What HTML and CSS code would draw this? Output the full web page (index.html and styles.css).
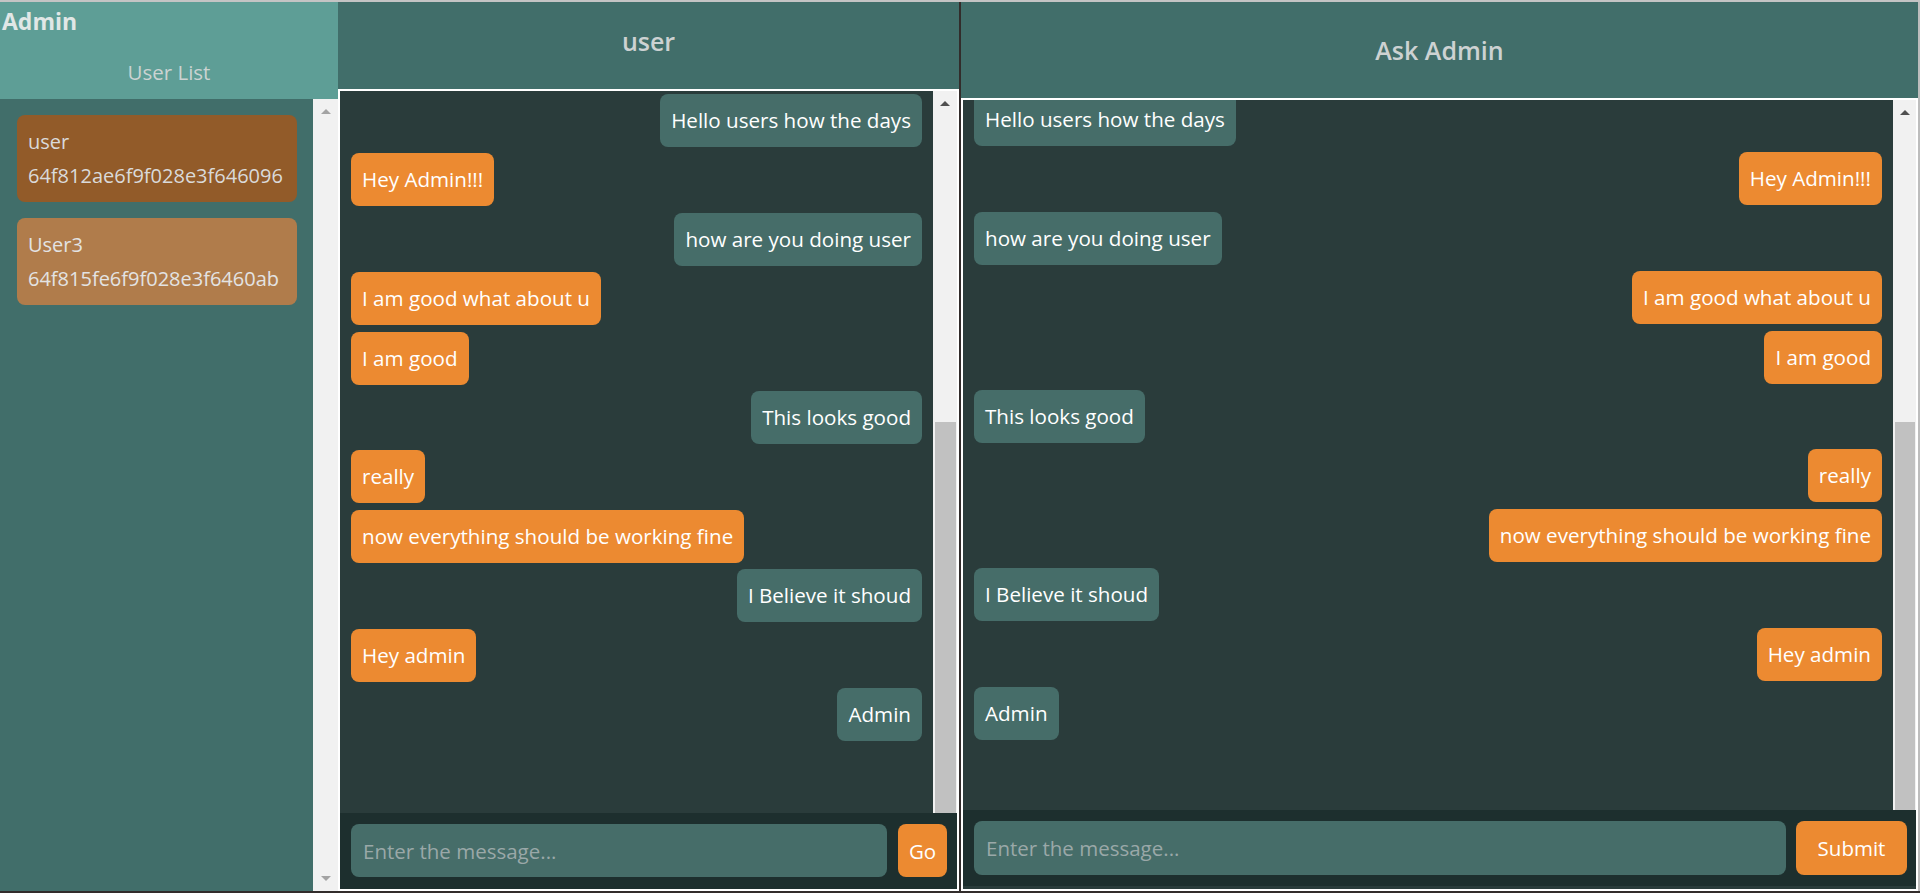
FILE: index.html
```html
<!DOCTYPE html>
<html lang="en">
<head>
<meta charset="utf-8">
<title>Chat</title>
<link rel="stylesheet" href="styles.css">
</head>
<body>
<div class="screen">
  <div class="win win-admin">
    <aside class="sidebar">
      <div class="sb-head">
        <div class="sb-title">Admin</div>
        <div class="sb-sub">User List</div>
      </div>
      <div class="sb-body">
        <div class="sb-list">
          <div class="ucard ucard-active">
            <div>user</div>
            <div>64f812ae6f9f028e3f646096</div>
          </div>
          <div class="ucard ucard-idle">
            <div>User3</div>
            <div>64f815fe6f9f028e3f6460ab</div>
          </div>
        </div>
        <div class="vscroll vscroll-side vscroll-off">
          <div class="sbtn"><span class="tri-up"></span></div>
          <div class="strack"></div>
          <div class="sbtn"><span class="tri-down"></span></div>
        </div>
      </div>
    </aside>
    <section class="chat">
      <header class="chat-head chat-head-admin">user</header>
      <div class="chat-box">
        <div class="chat-scroll">
          <div class="msgs msgs-admin">
            <div class="msg msg-admin msg-right">Hello users how the days</div>
            <div class="msg msg-user msg-left">Hey Admin!!!</div>
            <div class="msg msg-admin msg-right">how are you doing user</div>
            <div class="msg msg-user msg-left">I am good what about u</div>
            <div class="msg msg-user msg-left">I am good</div>
            <div class="msg msg-admin msg-right">This looks good</div>
            <div class="msg msg-user msg-left">really</div>
            <div class="msg msg-user msg-left">now everything should be working fine</div>
            <div class="msg msg-admin msg-right">I Believe it shoud</div>
            <div class="msg msg-user msg-left">Hey admin</div>
            <div class="msg msg-admin msg-right">Admin</div>
          </div>
          <div class="vscroll vscroll-chat-admin">
            <div class="sbtn"><span class="tri-up"></span></div>
            <div class="strack"><div class="sthumb sthumb-admin"></div></div>
          </div>
        </div>
        <div class="composer composer-admin">
          <input class="field" type="text" placeholder="Enter the message...">
          <button class="send send-go" type="button">Go</button>
        </div>
      </div>
    </section>
  </div>

  <div class="win win-user">
    <section class="chat">
      <header class="chat-head chat-head-user">Ask Admin</header>
      <div class="chat-box">
        <div class="chat-scroll">
          <div class="msgs msgs-user">
            <div class="msg msg-admin msg-left">Hello users how the days</div>
            <div class="msg msg-user msg-right">Hey Admin!!!</div>
            <div class="msg msg-admin msg-left">how are you doing user</div>
            <div class="msg msg-user msg-right">I am good what about u</div>
            <div class="msg msg-user msg-right">I am good</div>
            <div class="msg msg-admin msg-left">This looks good</div>
            <div class="msg msg-user msg-right">really</div>
            <div class="msg msg-user msg-right">now everything should be working fine</div>
            <div class="msg msg-admin msg-left">I Believe it shoud</div>
            <div class="msg msg-user msg-right">Hey admin</div>
            <div class="msg msg-admin msg-left">Admin</div>
          </div>
          <div class="vscroll vscroll-chat-user">
            <div class="sbtn"><span class="tri-up"></span></div>
            <div class="strack"><div class="sthumb sthumb-user"></div></div>
          </div>
        </div>
        <div class="composer composer-user">
          <input class="field field-user" type="text" placeholder="Enter the message...">
          <button class="send send-submit" type="button">Submit</button>
        </div>
      </div>
    </section>
  </div>
</div>
</body>
</html>
```

FILE: styles.css
```css
* {
  box-sizing: border-box;
  margin: 0;
  padding: 0;
}

html,
body {
  height: 893px;
}

body {
  background: #322c2b;
  font-family: "Open Sans", "Noto Sans", sans-serif;
  overflow: hidden;
}

.screen {
  display: flex;
  gap: 2px;
  height: 891px;
  border-top: 2px solid #c4c4c4;
}

.win {
  display: flex;
  height: 100%;
}

.win-admin {
  width: 959px;
}

.win-user {
  width: 959px;
  border-right: 2px solid #bdbdbd;
}

/* ---------- sidebar ---------- */
.sidebar {
  width: 338px;
  flex-shrink: 0;
  display: flex;
  flex-direction: column;
}

.sb-head {
  height: 97px;
  flex-shrink: 0;
  background: #5e9e96;
  padding-top: 4px;
}

.sb-title {
  font-size: 23px;
  font-weight: 700;
  line-height: 31px;
  padding-left: 2px;
  color: #e1e7e6;
}

.sb-sub {
  margin-top: 22px;
  text-align: center;
  font-size: 20.5px;
  line-height: 27px;
  color: #cbd3d2;
}

.sb-body {
  flex: 1;
  min-height: 0;
  display: flex;
  background: #416e6a;
}

.sb-list {
  flex: 1;
  display: flex;
  flex-direction: column;
  gap: 16px;
  padding: 16px 16px 0 17px;
}

.ucard {
  border-radius: 8px;
  padding: 10px 11px 9px;
  font-size: 20px;
  line-height: 34px;
  white-space: nowrap;
}

.ucard-active {
  background: #925b29;
  color: #dadada;
}

.ucard-idle {
  background: #b07c4b;
  color: #e3e3e3;
}

/* ---------- scrollbars ---------- */
.vscroll {
  flex-shrink: 0;
  display: flex;
  flex-direction: column;
  background: #f1f1f1;
}

.vscroll-side {
  width: 25px;
}

.vscroll-chat-admin {
  width: 24px;
}

.vscroll-chat-user {
  width: 23px;
}

.sbtn {
  height: 25px;
  flex-shrink: 0;
  display: flex;
  align-items: center;
  justify-content: center;
}

.tri-up {
  width: 0;
  height: 0;
  border-left: 5px solid transparent;
  border-right: 5px solid transparent;
  border-bottom: 5px solid #505050;
}

.tri-down {
  width: 0;
  height: 0;
  border-left: 5px solid transparent;
  border-right: 5px solid transparent;
  border-top: 5px solid #505050;
}

.vscroll-off .tri-up {
  border-bottom-color: #a3a3a3;
}

.vscroll-off .tri-down {
  border-top-color: #a3a3a3;
}

.strack {
  flex: 1;
  min-height: 0;
  display: flex;
  flex-direction: column;
}

.sthumb {
  flex: 1;
  background: #c1c1c1;
  margin: 0 1px 0 2px;
}

.sthumb-admin {
  margin-top: 306px;
}

.sthumb-user {
  margin-top: 297px;
}

/* ---------- chat ---------- */
.chat {
  flex: 1;
  min-width: 0;
  display: flex;
  flex-direction: column;
}

.chat-head {
  flex-shrink: 0;
  background: #416e6a;
  text-align: center;
  font-size: 25px;
  font-weight: 600;
  line-height: 34px;
  color: #cdd2d2;
}

.chat-head-admin {
  height: 87px;
  padding-top: 22px;
}

.chat-head-user {
  height: 96px;
  padding-top: 31px;
}

.chat-box {
  flex: 1;
  min-height: 0;
  display: flex;
  flex-direction: column;
  border: 2px solid #ffffff;
  background: #2a3c3b;
}

.chat-scroll {
  flex: 1;
  min-height: 0;
  display: flex;
  overflow: hidden;
}

.msgs {
  flex: 1;
  min-width: 0;
  display: flex;
  flex-direction: column;
  gap: 6.4px;
  padding: 0 11px;
}

.msgs-admin {
  padding-top: 3px;
}

.msgs-user {
  margin-top: -7px;
}

.msg {
  flex-shrink: 0;
  padding: 13px 11px;
  font-size: 20.6px;
  line-height: 27px;
  color: #ffffff;
  border-radius: 8px;
  white-space: nowrap;
}

.msg-left {
  align-self: flex-start;
}

.msg-right {
  align-self: flex-end;
}

.msg-admin {
  background: #466d69;
}

.msg-user {
  background: #ec8a31;
}

/* ---------- composer ---------- */
.composer {
  height: 76px;
  flex-shrink: 0;
  display: flex;
  background: #1d2f2e;
}

.composer-admin {
  padding: 11px 10px 12px 11px;
  gap: 11px;
}

.composer-user {
  padding: 11px 9px 11px 11px;
  gap: 10px;
  margin-bottom: 3px;
}

.field {
  flex: 1;
  min-width: 0;
  border: none;
  outline: none;
  border-radius: 8px;
  background: #466d69;
  padding: 0 12px;
  font-family: "Open Sans", "Noto Sans", sans-serif;
  font-size: 20.5px;
  color: #ffffff;
}

.field::placeholder {
  color: #9aa8a8;
}

.send {
  flex-shrink: 0;
  border: none;
  border-radius: 8px;
  background: #ec8a31;
  color: #ffffff;
  font-family: "Open Sans", "Noto Sans", sans-serif;
  font-size: 20.5px;
}

.send-go {
  width: 49px;
}

.send-submit {
  width: 111px;
}
```
